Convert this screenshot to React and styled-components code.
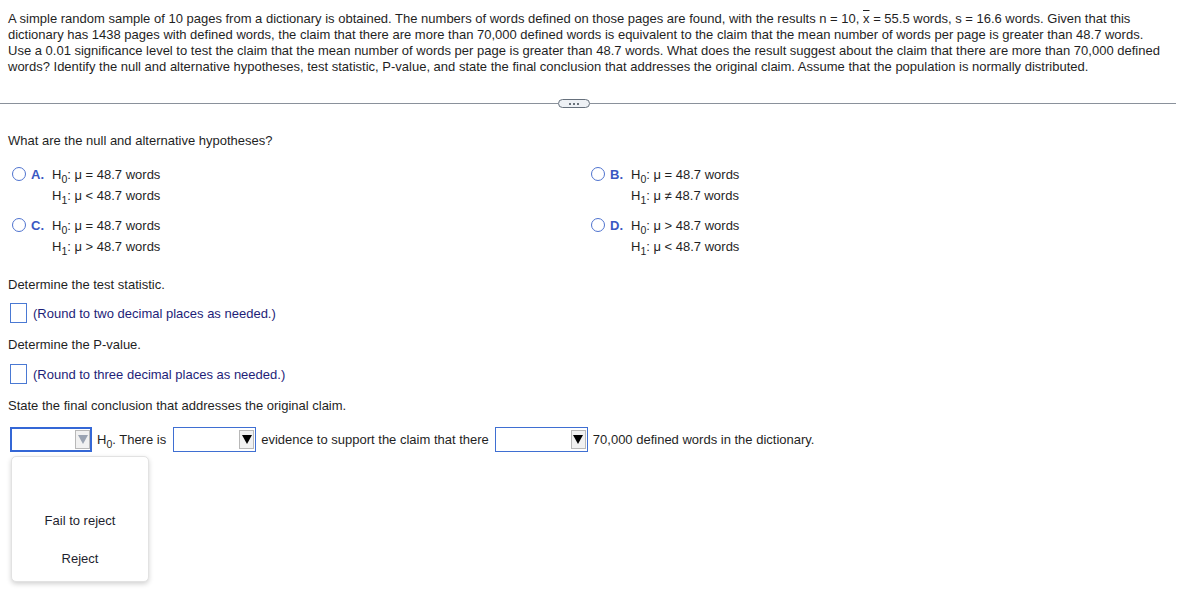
import styled, { createGlobalStyle } from "styled-components";

const Global = createGlobalStyle`
  html, body { margin: 0; padding: 0; background: #fff; }
  body {
    font-family: "Liberation Sans", Arial, sans-serif;
    font-size: 13px;
    color: #1f1f1f;
  }
`;

const Page = styled.div`
  min-height: 597px;
  box-sizing: border-box;
  padding: 11px 8px 0 8px;
`;

const Intro = styled.p`
  margin: 0;
  line-height: 16px;
  white-space: nowrap;
`;

const Bar = styled.span`
  text-decoration: overline;
`;

const Divider = styled.div`
  display: flex;
  align-items: center;
  margin: 24px -8px 0 -8px;
  padding-right: 6px;
`;

const Line = styled.div`
  flex: ${(p) => p.$grow};
  height: 1px;
  background: #8a919b;
`;

const Pill = styled.div`
  width: 30px;
  height: 7px;
  border: 1px solid #66707c;
  border-radius: 5px;
  background: #eef1f5;
  display: flex;
  align-items: center;
  justify-content: center;
  gap: 2px;
`;

const Dot = styled.span`
  width: 2px;
  height: 2px;
  background: #3e4752;
  border-radius: 1px;
`;

const Question = styled.div`
  margin-top: ${(p) => p.$top}px;
  line-height: 16px;
`;

const Options = styled.div`
  display: grid;
  grid-template-columns: 579px 1fr;
  row-gap: 15px;
  margin-top: 18px;
`;

const Option = styled.div`
  display: flex;
  align-items: flex-start;
  padding-left: 4px;
`;

const Radio = styled.span`
  width: 12px;
  height: 12px;
  border: 1.5px solid #4f73cf;
  border-radius: 50%;
  flex: none;
`;

const Letter = styled.span`
  color: #3a58c2;
  font-weight: bold;
  width: 21px;
  margin-left: 5px;
  line-height: 15px;
  flex: none;
`;

const Lines = styled.div`
  display: flex;
  flex-direction: column;
  gap: 6px;
`;

const Hyp = styled.div`
  line-height: 15px;
`;

const Sub = styled.sub`
  font-size: 10.5px;
  line-height: 0;
  vertical-align: -4px;
`;

const AnswerRow = styled.div`
  display: flex;
  align-items: center;
  gap: 6px;
  margin-top: ${(p) => p.$top}px;
  padding-left: 2px;
`;

const Box = styled.span`
  width: 15px;
  height: 18px;
  border: 1px solid #4a79d3;
  flex: none;
`;

const Hint = styled.span`
  color: #1e1e78;
`;

const Sentence = styled.div`
  display: flex;
  align-items: center;
  margin-top: 13px;
  padding-left: 2px;
  gap: 5px;
  position: relative;
`;

const Select = styled.div`
  width: ${(p) => p.$w}px;
  height: 25px;
  box-sizing: border-box;
  border: ${(p) => (p.$focus ? "2px solid #3467d6" : "1px solid #3f6fd2")};
  display: flex;
  justify-content: flex-end;
  align-items: center;
  padding-right: ${(p) => (p.$focus ? "0" : "1px")};
  margin-left: ${(p) => p.$ml || 0}px;
  flex: none;
  background: #fff;
`;

const Arrow = styled.span`
  width: 15px;
  height: 19px;
  box-sizing: border-box;
  background: #f1f1f1;
  border: 1px solid #b8b8b8;
  display: flex;
  align-items: center;
  justify-content: center;
  &::after {
    content: "";
    border-left: 5px solid transparent;
    border-right: 5px solid transparent;
    border-top: 9px solid ${(p) => (p.$dim ? "#9aa3b2" : "#000")};
  }
`;

const Menu = styled.div`
  position: absolute;
  top: 29px;
  left: 3px;
  width: 138px;
  height: 126px;
  box-sizing: border-box;
  padding: 6px 0;
  background: #fff;
  border: 1px solid #e2e2e2;
  border-radius: 5px;
  box-shadow: 0 2px 5px rgba(0, 0, 0, 0.18);
  z-index: 5;
`;

const Item = styled.div`
  height: 38px;
  display: flex;
  align-items: center;
  justify-content: center;
  color: #1f1f2f;
`;

const Text = styled.span`
  white-space: nowrap;
`;

function H({ n }) {
  return (
    <>
      H<Sub>{n}</Sub>
    </>
  );
}

const options = [
  { l: "A.", h0: "\u03bc = 48.7 words", h1: "\u03bc < 48.7 words" },
  { l: "B.", h0: "\u03bc = 48.7 words", h1: "\u03bc \u2260 48.7 words" },
  { l: "C.", h0: "\u03bc = 48.7 words", h1: "\u03bc > 48.7 words" },
  { l: "D.", h0: "\u03bc > 48.7 words", h1: "\u03bc < 48.7 words" },
];

export default function App() {
  return (
    <Page>
      <Global />
      <Intro>
        A simple random sample of 10 pages from a dictionary is obtained. The numbers of words defined on
        those pages are found, with the results n = 10, <Bar>x</Bar> = 55.5 words, s = 16.6 words. Given that
        this
        <br />
        dictionary has 1438 pages with defined words, the claim that there are more than 70,000 defined
        words is equivalent to the claim that the mean number of words per page is greater than 48.7 words.
        <br />
        Use a 0.01 significance level to test the claim that the mean number of words per page is greater
        than 48.7 words. What does the result suggest about the claim that there are more than 70,000
        defined
        <br />
        words? Identify the null and alternative hypotheses, test statistic, P-value, and state the final
        conclusion that addresses the original claim. Assume that the population is normally distributed.
      </Intro>

      <Divider>
        <Line $grow={1} />
        <Pill>
          <Dot />
          <Dot />
          <Dot />
        </Pill>
        <Line $grow={1.05} />
      </Divider>

      <Question $top={25}>What are the null and alternative hypotheses?</Question>

      <Options>
        {options.map((o) => (
          <Option key={o.l}>
            <Radio />
            <Letter>{o.l}</Letter>
            <Lines>
              <Hyp>
                <H n="0" />: {o.h0}
              </Hyp>
              <Hyp>
                <H n="1" />: {o.h1}
              </Hyp>
            </Lines>
          </Option>
        ))}
      </Options>

      <Question $top={23}>Determine the test statistic.</Question>
      <AnswerRow $top={10}>
        <Box />
        <Hint>(Round to two decimal places as needed.)</Hint>
      </AnswerRow>

      <Question $top={14}>Determine the P-value.</Question>
      <AnswerRow $top={11}>
        <Box />
        <Hint>(Round to three decimal places as needed.)</Hint>
      </AnswerRow>

      <Question $top={14}>State the final conclusion that addresses the original claim.</Question>
      <Sentence>
        <Select $w={82} $focus>
          <Arrow $dim />
        </Select>
        <Menu>
          <Item />
          <Item>Fail to reject</Item>
          <Item>Reject</Item>
        </Menu>
        <Text>
          <H n="0" />. There is
        </Text>
        <Select $w={83} $ml={2}>
          <Arrow />
        </Select>
        <Text>evidence to support the claim that there</Text>
        <Select $w={93} $ml={1}>
          <Arrow />
        </Select>
        <Text>70,000 defined words in the dictionary.</Text>
      </Sentence>
    </Page>
  );
}
